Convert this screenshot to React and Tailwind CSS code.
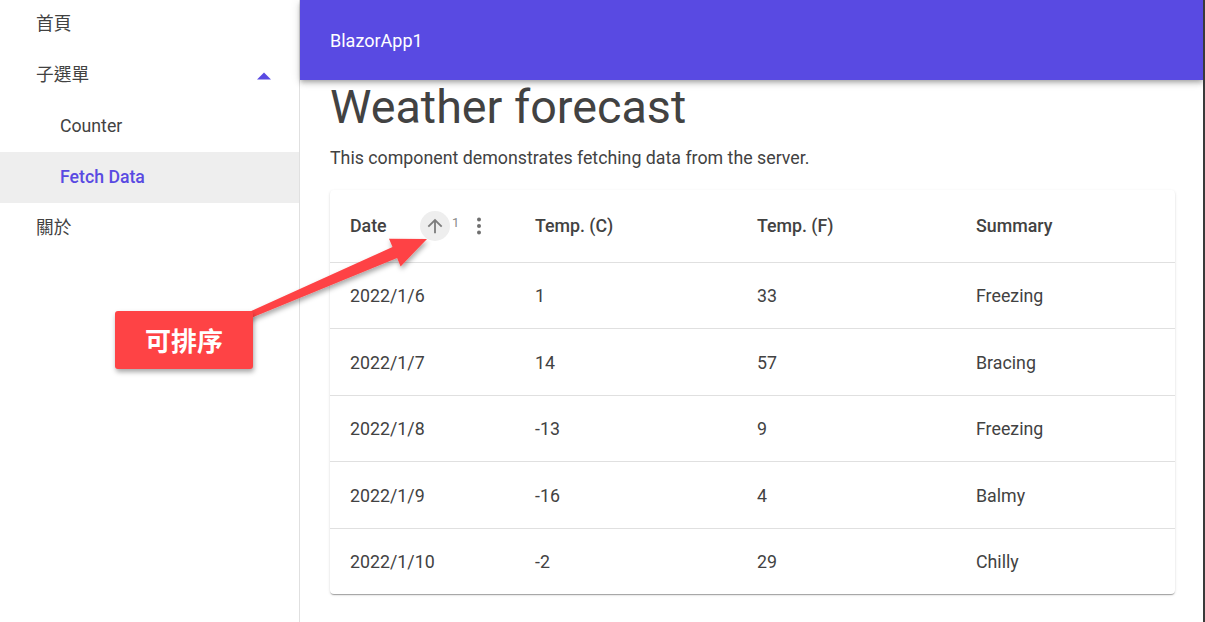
import React from "react";

const rows = [
  ["2022/1/6", "1", "33", "Freezing"],
  ["2022/1/7", "14", "57", "Bracing"],
  ["2022/1/8", "-13", "9", "Freezing"],
  ["2022/1/9", "-16", "4", "Balmy"],
  ["2022/1/10", "-2", "29", "Chilly"],
];

const font = { fontFamily: 'Roboto, "Noto Sans CJK TC", sans-serif' };

export default function App() {
  return (
    <div
      className="relative flex h-[622px] w-[1205px] overflow-hidden bg-white text-[#424242] border-r-2 border-[#3a3a3a]"
      style={font}
    >
      {/* Sidebar */}
      <aside className="w-[300px] shrink-0 border-r border-[#e0e0e0] bg-white text-[17.7px]">
        <div className="flex h-[50px] items-center pl-[36px] pb-[1px]">首頁</div>
        <div className="flex h-[51px] items-center justify-between pl-[36px] pr-[28px]">
          <span>子選單</span>
          <svg width="14" height="8" viewBox="0 0 14 8">
            <polygon points="0,7.5 7,0.5 14,7.5" fill="#594ae2" />
          </svg>
        </div>
        <div className="flex h-[51px] items-center pl-[60px]">Counter</div>
        <div className="flex h-[51px] items-center bg-[#eeeeee] pl-[60px] text-[#594ae2] font-medium">
          Fetch Data
        </div>
        <div className="flex h-[51px] items-center pl-[36px]">關於</div>
      </aside>

      {/* Main */}
      <main className="relative z-10 flex flex-1 flex-col">
        <header className="relative z-10 flex h-[80px] shrink-0 items-center bg-[#594ae2] pl-[30px] text-[18px] text-white shadow-[0_2px_4px_-1px_rgba(0,0,0,0.2),0_4px_5px_0_rgba(0,0,0,0.14),0_1px_10px_0_rgba(0,0,0,0.12)]">
          BlazorApp1
        </header>
        <div className="pl-[30px] pr-[28px]">
          <h1 className="mt-[-1px] text-[46.7px] leading-[56px] font-normal">Weather forecast</h1>
          <p className="mt-[11px] text-[17.8px] leading-[24px]">
            This component demonstrates fetching data from the server.
          </p>
          <div className="mt-[20px] w-[845px] rounded-[4px] bg-white text-[17.8px] shadow-[0_2px_1px_-1px_rgba(0,0,0,0.2),0_1px_1px_0_rgba(0,0,0,0.14),0_1px_3px_0_rgba(0,0,0,0.12)]">
            <div className="grid h-[72px] grid-cols-[185px_222px_219px_219px] items-center font-medium">
              <div className="flex items-center pl-[20px]">
                <span className="w-[37px]">Date</span>
                <span className="ml-[33px] flex h-[30px] w-[30px] items-center justify-center rounded-full bg-[#eeeeee]">
                  <svg width="22" height="22" viewBox="0 0 24 24">
                    <path d="M4 12l1.41 1.41L11 7.83V20h2V7.83l5.58 5.59L20 12l-8-8-8 8z" fill="#7d7d7d" />
                  </svg>
                </span>
                <span className="ml-[2px] mt-[-6px] text-[13px] font-normal text-[#8a8a8a]">1</span>
                <svg className="ml-[17px]" width="6" height="20" viewBox="0 0 6 20">
                  <circle cx="3" cy="3.5" r="2" fill="#6f6f6f" />
                  <circle cx="3" cy="10" r="2" fill="#6f6f6f" />
                  <circle cx="3" cy="16.5" r="2" fill="#6f6f6f" />
                </svg>
              </div>
              <div className="pl-[20px]">Temp. (C)</div>
              <div className="pl-[20px]">Temp. (F)</div>
              <div className="pl-[20px]">Summary</div>
            </div>
            {rows.map((r, i) => (
              <div
                key={i}
                className="grid h-[66.4px] grid-cols-[185px_222px_219px_219px] items-center border-t border-[#e0e0e0] pt-[2px]"
              >
                {r.map((c, j) => (
                  <div key={j} className="pl-[20px]">
                    {c}
                  </div>
                ))}
              </div>
            ))}
          </div>
        </div>
      </main>

      {/* Annotation overlay */}
      <svg
        className="pointer-events-none absolute left-0 top-0 z-20"
        width="1205"
        height="622"
        viewBox="0 0 1205 622"
      >
        <defs>
          <filter id="sh" x="-20%" y="-20%" width="140%" height="140%">
            <feDropShadow dx="1" dy="3" stdDeviation="2.5" floodColor="#000" floodOpacity="0.35" />
          </filter>
        </defs>
        <polygon
          points="241.8,315.2 392.5,247.1 389,238.8 427,239 400.6,266.4 397.1,258.1 244.2,320.8"
          fill="#fe4345"
          filter="url(#sh)"
        />
      </svg>
      <div
        className="absolute left-[115px] top-[311px] z-30 flex h-[58px] w-[138px] items-center justify-center rounded-[3px] bg-[#fe4345] pb-[2px] text-[26px] font-bold text-white shadow-[1px_3px_5px_rgba(0,0,0,0.35)]"
        style={{ fontFamily: '"Noto Sans CJK TC", sans-serif' }}
      >
        可排序
      </div>
    </div>
  );
}
